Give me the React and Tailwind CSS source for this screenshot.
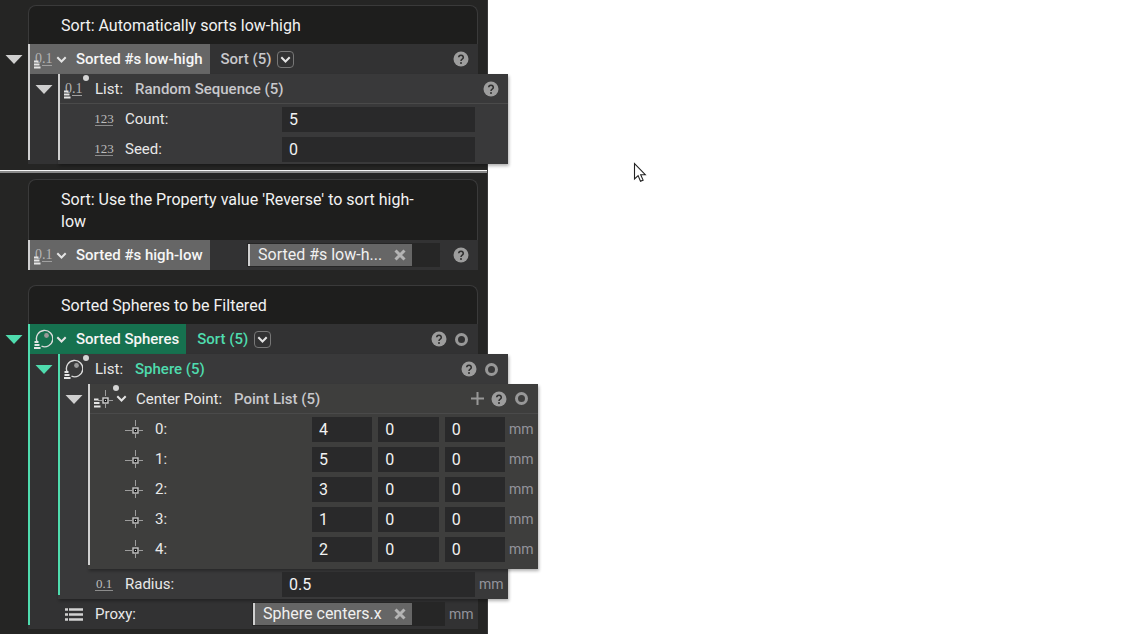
import { useState } from 'react';
import clsx from 'clsx';

const Bars = () => (
    <path d="M1 12.5h4.5M1 15.5h5.5M1 18.5h6.5" stroke="#e6e6e6" strokeWidth="2" fill="none" />
);

const NumberListIcon = () => (
    <svg className="w-5 h-5" viewBox="0 0 20 20" aria-hidden="true">
        <text x="2" y="14" fontSize="14" fill="#b4b4b4" fontFamily="Liberation Serif, serif">0.1</text>
        <path d="M9 16.5h10" stroke="#a0a0a0" />
        <Bars />
    </svg>
);

const SphereListIcon = () => (
    <svg className="w-5 h-5" viewBox="0 0 20 20" fill="none" aria-hidden="true">
        <path d="M3.9 12.4A8.2 8.2 0 1 1 8.500 17.2" stroke="#dcdcdc" strokeWidth="1.4" />
        <circle cx="13.5" cy="6.5" r="2.4" fill="#9a9a9a" />
        <path d="M1.5 13h4M1.5 16h5M1 19h6.5" stroke="#e6e6e6" strokeWidth="1.9" />
    </svg>
);

const PointListIcon = () => (
    <svg className="w-5 h-5" viewBox="0 0 20 20" fill="none" aria-hidden="true">
        <path d="M12.5 1v6M12.5 15v4M5 11.5h4M16 11.5h4" stroke="#9c9c9c" />
        <rect x="10" y="9" width="5" height="5" fill="#1b1b1b" stroke="#cfcfcf" strokeWidth="1.4" />
        <rect x="12" y="11" width="1" height="1" fill="#cfcfcf" />
        <path d="M1 10.5h4.5M1 14h5.5M1 17.5h6.5" stroke="#e6e6e6" strokeWidth="2" />
    </svg>
);

const PointIcon = () => (
    <svg className="w-[18px] h-[18px]" viewBox="0 0 18 18" fill="none" aria-hidden="true">
        <path d="M10.5 0v6M10.5 14v4M0 10.5h7M14 10.5h4" stroke="#9c9c9c" />
        <rect x="8" y="8" width="5" height="5" fill="#1b1b1b" stroke="#c4c4c4" strokeWidth="1.4" />
        <rect x="10" y="10" width="1" height="1" fill="#cfcfcf" />
    </svg>
);

const DigitsIcon = ({ text }) => (
    <svg className="w-[18px] h-[18px] overflow-visible" viewBox="0 0 18 18" aria-hidden="true">
        <text x="9" y="13" fontSize="13" textAnchor="middle" fill="#bcbcbc" fontFamily="Liberation Serif, serif">{text}</text>
        <path d="M0 15.5h18" stroke="#8c8c8c" />
    </svg>
);

const RowsIcon = () => (
    <svg className="w-[18px] h-[18px]" viewBox="0 0 18 18" aria-hidden="true">
        <path d="M0 4.5h3M4 4.5h14M0 9.5h3M4 9.5h14M0 14.5h3M4 14.5h14" stroke="#d2d2d2" strokeWidth="2.6" />
    </svg>
);

const Chevron = () => (
    <svg className="w-[11px] h-[11px]" viewBox="0 0 11 11" fill="none" aria-hidden="true">
        <path d="M1.3 3.3l4.2 4.2 4.2-4.2" stroke="#e4e4e4" strokeWidth="2" />
    </svg>
);

const HelpButton = () => (
    <button className="w-[22px] flex justify-center" aria-label="Help">
        <svg className="w-4 h-4" viewBox="0 0 16 16" fill="none" aria-hidden="true">
            <circle cx="8" cy="8" r="7.5" fill="#9d9d9d" />
            <path d="M5.7 6.3a2.3 2.1 0 1 1 3.5 1.8C8.3 8.7 8 9 8 10" stroke="#2f2f2f" strokeWidth="1.6" />
            <circle cx="8" cy="12" r="1" fill="#2f2f2f" />
        </svg>
    </button>
);

const RingButton = () => (
    <button className="w-[22px] flex justify-center" aria-label="Output">
        <span className="w-[13px] h-[13px] rounded-full border-[3px] border-[#989898]" />
    </button>
);

const AddButton = () => (
    <button className="w-[22px] flex justify-center" aria-label="Add">
        <svg className="w-[13px] h-[13px]" viewBox="0 0 13 13" aria-hidden="true">
            <path d="M6.5 0v13M0 6.5h13" stroke="#989898" strokeWidth="2" />
        </svg>
    </button>
);

const Reference = ({ children, className }) => (
    <div className={clsx('h-6 bg-[#262626] py-px pl-px flex', className)}>
        <div className="h-[22px] bg-[#666666] border-l-2 border-[#d0d0d0] pl-2 pr-[6px] flex items-center gap-3 text-base leading-[22px] text-[#f0f0f0]">
            {children}
            <button aria-label="Clear">
                <svg className="w-3 h-3" viewBox="0 0 12 12" aria-hidden="true">
                    <path d="M1.5 1.5l9 9M10.5 1.5l-9 9" stroke="#b4b4b4" strokeWidth="3" />
                </svg>
            </button>
        </div>
    </div>
);

const Field = ({ id, label, value }) => {
    const [text, setText] = useState(value);
    return (
        <input
            id={id}
            aria-label={label}
            value={text}
            onChange={(e) => setText(e.target.value)}
            className="flex-1 min-w-0 h-[25px] px-[7px] bg-[#29292a] text-base text-[#f2f2f2] outline-none"
        />
    );
};

const Row = ({ icon, label, id, unit, children }) => (
    <div className="h-[30px] flex items-center">
        <div className="w-[222px] pl-[35px] flex items-center gap-3 shrink-0">
            {icon}
            <label htmlFor={id} className="text-[#e8e8e8]">{label}</label>
        </div>
        <div className="w-[193px] flex gap-[6px] shrink-0">{children}</div>
        {unit && <span className="pl-1 text-sm text-[#93939b]">{unit}</span>}
    </div>
);

const Note = ({ children }) => (
    <div className="ml-7 w-[450px] pl-8 pr-10 pt-[9px] pb-[7px] text-base leading-[22px] bg-[#1e1e1d] border border-b-0 border-[#3a3a3a] rounded-t-lg text-[#f2f2f2]">
        {children}
    </div>
);

const Toggle = ({ active }) => (
    <button className="w-7 h-[30px] flex items-center justify-center" aria-label="Toggle">
        <svg className="w-[18px] h-[9px]" viewBox="0 0 18 9" aria-hidden="true">
            <path d="M0.5 0h17L9 9z" fill={active ? '#4fdcae' : '#cfcfcf'} />
        </svg>
    </button>
);

// A node is a toggle in the gutter plus a body whose left bar marks its depth
const Node = ({ header, active, toggle = true, className, children }) => (
    <div className="flex">
        <div className="w-7 shrink-0">{toggle && <Toggle active={active} />}</div>
        <div className={clsx('w-[450px] shrink-0 flex', className)}>
            <div className={clsx('w-0.5 shrink-0', children && 'mb-1', active ? 'bg-[#4fdcae]' : 'bg-[#d0d0d0]')} />
            <div className="flex-1 min-w-0">
                {header}
                {children}
            </div>
        </div>
    </div>
);

const Title = ({ icon, name, active, type, children }) => (
    <div className="h-[30px] flex items-center pr-[6px]">
        <div className={clsx('h-full pl-[3px] pr-[7px] flex items-center font-medium text-[#f6f6f6]', active ? 'bg-[#16714f]' : 'bg-[#666666]')}>
            {icon}
            <button className="ml-[3px] mr-[9px]" aria-label="Change kind"><Chevron /></button>
            {name}
        </div>
        {type && (
            <>
                <span className={clsx('ml-[11px] font-medium', active ? 'text-[#4fdcae]' : 'text-[#c8c8cc]')}>{type}</span>
                <button className="ml-[6px] w-[17px] h-[17px] rounded-sm border border-[#777777] flex items-center justify-center" aria-label="Choose type">
                    <Chevron />
                </button>
            </>
        )}
        <div className="flex-1 flex justify-end items-center">{children}</div>
    </div>
);

const Property = ({ icon, name, type, active, menu, line, children }) => (
    <div className={clsx('h-[30px] flex items-center pl-[3px] pr-[6px]', line && 'border-b border-[#4a4a4a]')}>
        <div className="relative">
            {icon}
            <span className="absolute top-[-4px] right-[-6px] w-[6px] h-[6px] rounded-full bg-[#d4d4d4]" />
        </div>
        {menu && <button className="ml-[3px]" aria-label="Change kind"><Chevron /></button>}
        <span className={clsx('text-[#e8e8e8]', menu ? 'ml-[9px]' : 'ml-3')}>{name}</span>
        <span className={clsx('ml-3 font-medium', active ? 'text-[#4fdcae]' : 'text-[#c8c8cc]')}>{type}</span>
        <div className="flex-1 flex justify-end items-center">{children}</div>
    </div>
);

const points = [4, 5, 3, 1, 2];

const App = () => {
    return (
        <div className="min-h-screen bg-white font-['Roboto',sans-serif] text-[15px] leading-[22px]">
            <main className="w-[488px] min-h-screen bg-[#252524] border-r border-[#3a3a3a] pt-[5px]">
                <Note>Sort: Automatically sorts low-high</Note>
                <Node
                    className="bg-[#323233]"
                    header={
                        <Title icon={<NumberListIcon />} name="Sorted #s low-high" type="Sort (5)">
                            <HelpButton />
                        </Title>
                    }
                >
                    <Node
                        className="bg-[#39393a] shadow-[1px_2px_3px_rgba(0,0,0,0.3)]"
                        header={
                            <Property icon={<NumberListIcon />} name="List:" type="Random Sequence (5)" line>
                                <HelpButton />
                            </Property>
                        }
                    >
                        <Row icon={<DigitsIcon text="123" />} label="Count:" id="count">
                            <Field id="count" value="5" />
                        </Row>
                        <Row icon={<DigitsIcon text="123" />} label="Seed:" id="seed">
                            <Field id="seed" value="0" />
                        </Row>
                    </Node>
                </Node>

                <div className="my-[6px] h-[3px] bg-[#8a8a8a] border-t border-[#f5f5f5]" />

                <Note>Sort: Use the Property value 'Reverse' to sort high-low</Note>
                <Node
                    toggle={false}
                    className="bg-[#323233]"
                    header={
                        <Title icon={<NumberListIcon />} name="Sorted #s high-low">
                            <Reference className="w-[193px] mr-[10px]">Sorted #s low-h...</Reference>
                            <HelpButton />
                        </Title>
                    }
                />

                <div className="pt-[15px]">
                    <Note>Sorted Spheres to be Filtered</Note>
                    <Node
                        active
                        className="bg-[#323233]"
                        header={
                            <Title icon={<SphereListIcon />} name="Sorted Spheres" type="Sort (5)" active>
                                <HelpButton />
                                <RingButton />
                            </Title>
                        }
                    >
                        <Node
                            active
                            className="bg-[#39393a] shadow-[1px_2px_3px_rgba(0,0,0,0.3)]"
                            header={
                                <Property icon={<SphereListIcon />} name="List:" type="Sphere (5)" active>
                                    <HelpButton />
                                    <RingButton />
                                </Property>
                            }
                        >
                            <Node
                                className="bg-[#3e3e3d] shadow-[1px_2px_3px_rgba(0,0,0,0.3)]"
                                header={
                                    <Property icon={<PointListIcon />} name="Center Point:" type="Point List (5)" menu line>
                                        <AddButton />
                                        <HelpButton />
                                        <RingButton />
                                    </Property>
                                }
                            >
                                <div className="pb-[5px]">
                                    {points.map((x, i) => (
                                        <Row key={i} icon={<PointIcon />} label={`${i}:`} id={`point-${i}`} unit="mm">
                                            <Field id={`point-${i}`} value={x} />
                                            <Field label={`${i} y`} value={0} />
                                            <Field label={`${i} z`} value={0} />
                                        </Row>
                                    ))}
                                </div>
                            </Node>
                            <Row icon={<DigitsIcon text="0.1" />} label="Radius:" id="radius" unit="mm">
                                <Field id="radius" value="0.5" />
                            </Row>
                        </Node>
                        <Row icon={<RowsIcon />} label="Proxy:" unit="mm">
                            <Reference className="w-full">Sphere centers.x</Reference>
                        </Row>
                    </Node>
                </div>
            </main>

            <svg className="absolute left-[633px] top-[162px] w-[14px] h-[21px]" viewBox="0 0 14 21" aria-hidden="true">
                <path d="M1.5 1.5v15.5l3.6-3.4 2.4 5.6 2.6-1.1-2.4-5.4h4.6z" fill="#fff" stroke="#222" strokeWidth="1.1" />
            </svg>
        </div>
    );
};

export default App;
